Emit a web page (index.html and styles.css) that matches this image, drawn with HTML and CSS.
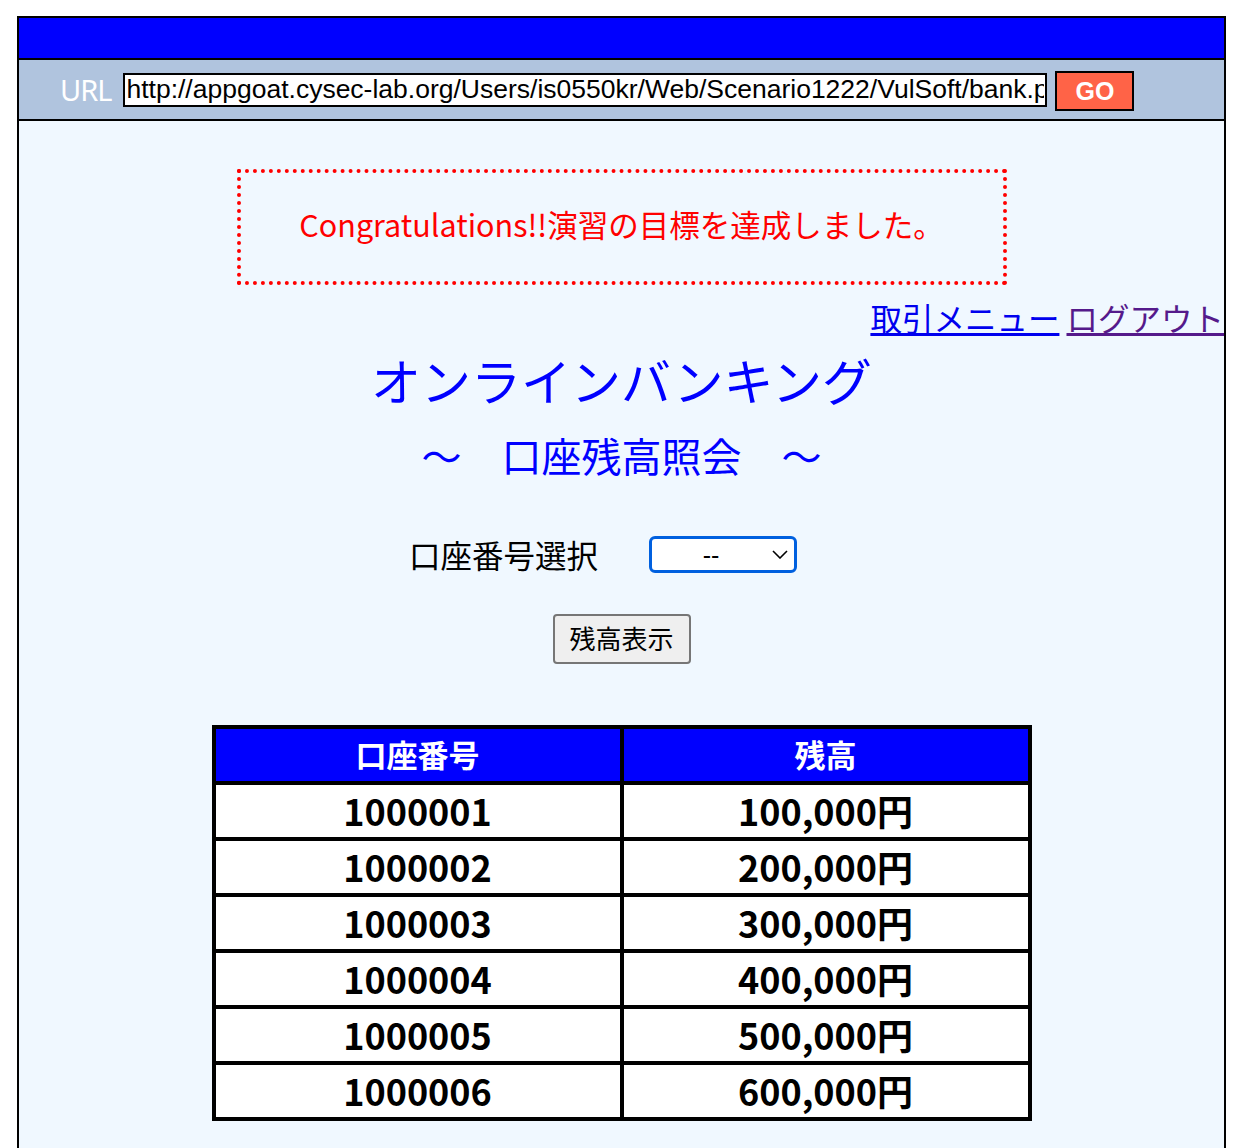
FILE: index.html
```html
<!DOCTYPE html>
<html lang="ja">
<head>
<meta charset="utf-8">
<title>オンラインバンキング</title>
<link rel="stylesheet" href="styles.css">
</head>
<body>
<div class="frame">
  <div class="topbar"></div>
  <div class="urlbar">
    <span class="url-label">URL</span>
    <input class="url-input" type="text" value="http://appgoat.cysec-lab.org/Users/is0550kr/Web/Scenario1222/VulSoft/bank.php">
    <button class="go-btn" type="button">GO</button>
  </div>
  <div class="content">
    <div class="congrats">Congratulations!!演習の目標を達成しました。</div>
    <div class="links"><a class="link" href="#">取引メニュー</a> <a class="link visited" href="#">ログアウト</a></div>
    <h1 class="title">オンラインバンキング</h1>
    <h2 class="subtitle">～　口座残高照会　～</h2>
    <div class="select-row">
      <span class="select-label">口座番号選択</span>
      <span class="select-wrap">
        <select class="acct-select"><option>--</option></select>
        <svg class="chevron" width="16" height="9" viewBox="0 0 16 9"><path d="M1 1 L8 8 L15 1" fill="none" stroke="#000" stroke-width="1.6"/></svg>
      </span>
    </div>
    <div class="btn-row"><button class="show-btn" type="button">残高表示</button></div>
    <table class="balances">
      <thead>
        <tr><th>口座番号</th><th>残高</th></tr>
      </thead>
      <tbody>
        <tr><td>1000001</td><td>100,000円</td></tr>
        <tr><td>1000002</td><td>200,000円</td></tr>
        <tr><td>1000003</td><td>300,000円</td></tr>
        <tr><td>1000004</td><td>400,000円</td></tr>
        <tr><td>1000005</td><td>500,000円</td></tr>
        <tr><td>1000006</td><td>600,000円</td></tr>
      </tbody>
    </table>
  </div>
</div>
</body>
</html>
```
FILE: styles.css
```css
* { box-sizing: border-box; }
html, body { margin: 0; padding: 0; background: #ffffff; }
body { font-family: "Noto Sans CJK JP", "Noto Sans", sans-serif; }

.frame {
  width: 1209px;
  margin: 16px 0 0 17px;
  border: 2px solid #000;
  border-bottom: none;
}

.topbar {
  height: 42px;
  background: #0000ff;
  border-bottom: 2px solid #000;
}

.urlbar {
  height: 61px;
  background: #b0c4de;
  border-bottom: 2px solid #000;
  display: flex;
  align-items: center;
  padding-left: 41px;
}

.url-label {
  color: #fff;
  font-family: "Noto Sans", sans-serif;
  font-size: 29px;
  letter-spacing: -1px;
  margin-right: 12px;
  line-height: 1;
}

.url-input {
  width: 924px;
  height: 34px;
  border: 2px solid #000;
  background: #fff;
  font-family: "Liberation Sans", Arial, sans-serif;
  font-size: 26.5px;
  color: #000;
  padding: 0 1px;
  margin: 0 8px 0 0;
  outline: none;
}

.go-btn {
  width: 79px;
  height: 40px;
  background: #ff6347;
  border: 2px solid #000;
  color: #fff;
  font-family: "Liberation Sans", Arial, sans-serif;
  font-weight: bold;
  font-size: 25px;
  padding: 0;
  margin-top: 3px;
}

.content {
  background: #f0f8ff;
  padding: 48px 0 60px 0;
  min-height: 1040px;
}

.congrats {
  width: 770px;
  height: 116px;
  margin: 0 auto;
  border: 4px dotted #ff0000;
  color: #ff0000;
  font-size: 30.5px;
  padding-bottom: 6px;
  display: flex;
  align-items: center;
  justify-content: center;
}

.links {
  margin-top: 12px;
  text-align: right;
  font-size: 31.5px;
  line-height: 40px;
  white-space: nowrap;
}
.link { color: #0000ee; }
.link.visited { color: #551a8b; }

.title {
  margin: 12px 0 0 0;
  text-align: center;
  color: #0000ff;
  font-weight: normal;
  font-size: 50px;
  line-height: 60px;
}

.subtitle {
  margin: 21px 0 0 0;
  text-align: center;
  color: #0000ff;
  font-weight: normal;
  font-size: 40px;
  line-height: 50px;
}

.select-row {
  margin-top: 56px;
  display: flex;
  justify-content: center;
  align-items: center;
  gap: 51px;
  padding-right: 37px;
  height: 37px;
}

.select-label {
  font-size: 31.5px;
  color: #000;
  line-height: 37px;
}

.select-wrap {
  position: relative;
  display: inline-block;
  width: 148px;
  height: 37px;
}

.acct-select {
  appearance: none;
  -webkit-appearance: none;
  width: 148px;
  height: 37px;
  border: 3px solid #0060df;
  border-radius: 6px;
  background: #fff;
  font-family: "Liberation Sans", Arial, sans-serif;
  font-size: 25px;
  color: #000;
  padding: 0 24px 0 0;
  text-align: center;
  text-align-last: center;
  outline: none;
}

.chevron {
  position: absolute;
  right: 9px;
  top: 14px;
  pointer-events: none;
}

.btn-row {
  margin-top: 41px;
  display: flex;
  justify-content: center;
}

.show-btn {
  width: 138px;
  height: 50px;
  background: #efefef;
  border: 2px solid #767676;
  border-radius: 4px;
  font-family: "Noto Sans CJK JP", sans-serif;
  font-size: 26px;
  line-height: 1;
  color: #000;
  padding: 0 0 3px 0;
}

.balances {
  margin: 61px auto 0 auto;
  width: 820px;
  border-collapse: collapse;
  table-layout: fixed;
}

.balances th,
.balances td {
  border: 4px solid #000;
  height: 56px;
  padding: 0 0 3px 0;
  text-align: center;
  vertical-align: middle;
  line-height: 1;
}

.balances th {
  background: #0000ff;
  color: #fff;
  font-weight: bold;
  font-size: 31px;
}

.balances td {
  background: #fff;
  color: #000;
  font-weight: bold;
  font-size: 36px;
}
```
